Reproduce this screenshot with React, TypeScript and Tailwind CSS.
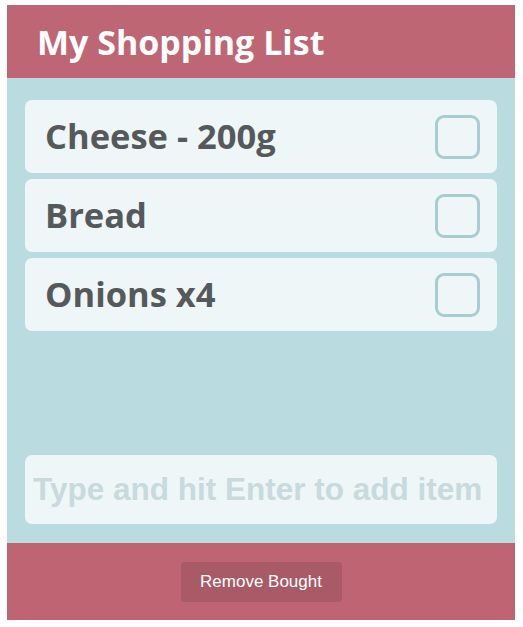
import { useState } from 'react';

const items = ['Cheese - 200g', 'Bread', 'Onions x4'];

export default function App() {
  const [checked, setChecked] = useState<boolean[]>(items.map(() => false));

  return (
    <div className="min-h-screen bg-white pt-[5px] pl-[7px]">
      <div className="w-[508px] flex flex-col">
        {/* HEADER */}
        <div className="h-[73px] bg-[#be6674] flex items-center pl-[30px]">
          <h1 className="text-[34px] font-bold text-white leading-none" style={{ fontFamily: '"Open Sans", sans-serif' }}>
            My Shopping List
          </h1>
        </div>

        {/* LISTA */}
        <div className="h-[465px] bg-[#badbdf] px-[18px] pt-[22px] pb-[19px] flex flex-col">
          <div className="flex flex-col gap-[6px]">
            {items.map((it, i) => (
              <div key={it} className="h-[73px] bg-[#eef6f8] rounded-[7px] flex items-center justify-between pl-[20px] pr-[17px]">
                <span className="text-[34.5px] font-bold text-[#56595b] leading-none" style={{ fontFamily: '"Open Sans", sans-serif' }}>
                  {it}
                </span>
                <button
                  onClick={() => setChecked(c => c.map((v, j) => (j === i ? !v : v)))}
                  className="w-[45px] h-[44px] rounded-[9px] border-[3px] border-[#a6ced1] bg-[#eef6f8]"
                />
              </div>
            ))}
          </div>
          <div className="mt-auto h-[69px] bg-[#eef6f8] rounded-[7px] flex items-center pl-[8px]">
            <input
              className="w-full bg-transparent outline-none text-[31.5px] font-bold text-[#56595b] placeholder:text-[#c8dadd]"
              style={{ fontFamily: '"Liberation Sans", Arial, sans-serif' }}
              placeholder="Type and hit Enter to add item"
            />
          </div>
        </div>

        {/* FOOTER */}
        <div className="h-[77px] bg-[#bf6473] flex items-center justify-center">
          <button
            className="w-[161px] h-[40px] rounded-[4px] bg-[#a85b67] text-white text-[17px]"
            style={{ fontFamily: '"Liberation Sans", Arial, sans-serif' }}
          >
            Remove Bought
          </button>
        </div>
      </div>
    </div>
  );
}
